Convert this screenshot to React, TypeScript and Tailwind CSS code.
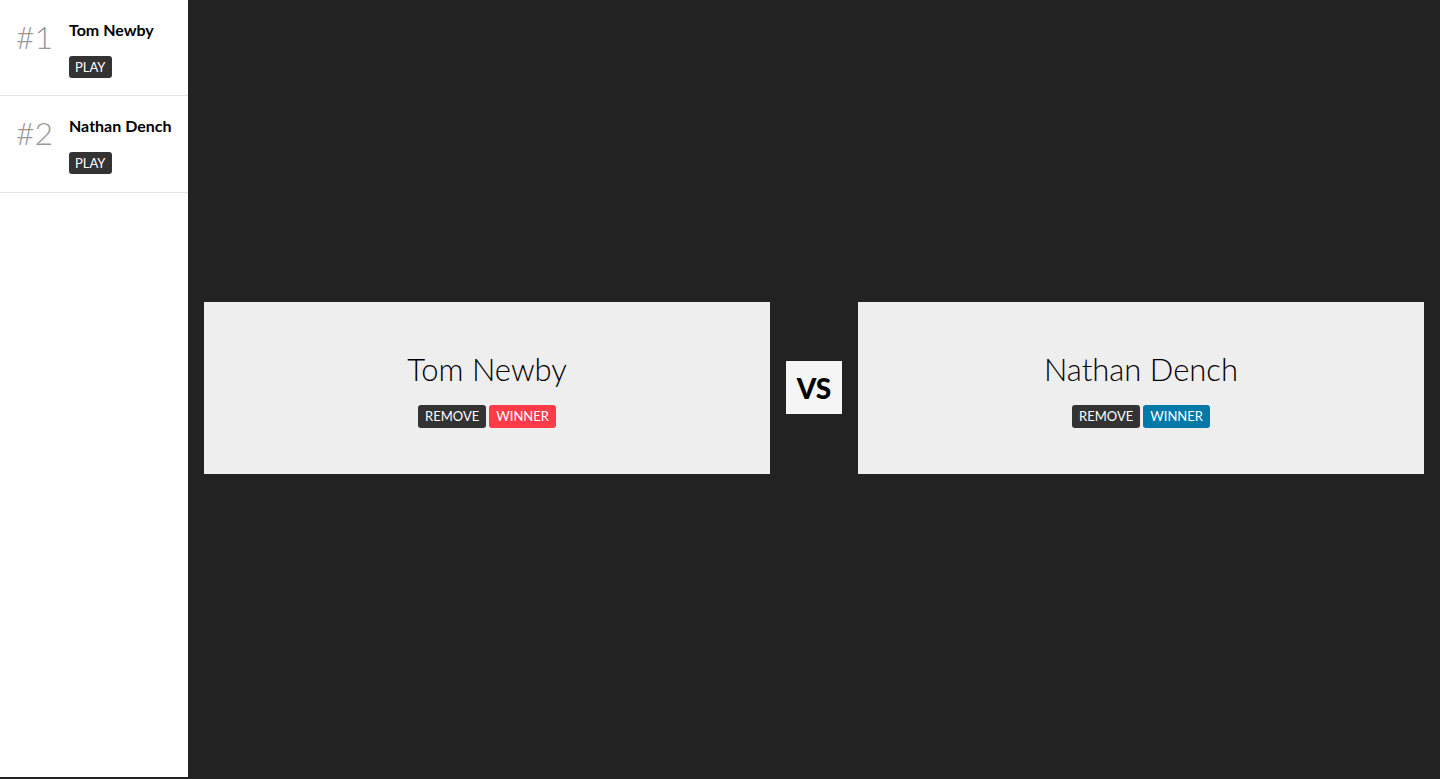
import React from "react";

const players = [
  { rank: 1, name: "Tom Newby", h: "h-[96px]" },
  { rank: 2, name: "Nathan Dench", h: "h-[97px]" },
];

function Btn({ children, className }: { children: React.ReactNode; className: string }) {
  return (
    <span className={`inline-block rounded-[3px] px-[7px] text-[13px] leading-[23px] text-white ${className}`}>
      {children}
    </span>
  );
}

function Card({ name, winnerClass }: { name: string; winnerClass: string }) {
  return (
    <div className="flex-1 bg-[#eeeeee] flex flex-col items-center pt-[47px] pb-[46px]">
      <div className="text-[31px] leading-[40px] font-light text-black">{name}</div>
      <div className="flex gap-[3px] mt-[16px]">
        <Btn className="bg-[#333333]">REMOVE</Btn>
        <Btn className={winnerClass}>WINNER</Btn>
      </div>
    </div>
  );
}

export default function App() {
  return (
    <div
      className="flex h-[779px] w-[1440px] overflow-hidden bg-[#222222]"
      style={{ fontFamily: "Lato, 'Open Sans', sans-serif" }}
    >
      <aside className="w-[188px] h-[777px] bg-white shrink-0">
        {players.map((p) => (
          <div key={p.rank} className={`flex border-b border-[#e3e3e3] px-4 pt-[18px] ${p.h}`}>
            <div className="w-[53px] text-[32px] leading-[38px] font-light text-[#999999]">#{p.rank}</div>
            <div className="flex flex-col">
              <div className="text-[16px] leading-[24px] font-bold text-black">{p.name}</div>
              <div className="mt-[12px]">
                <span className="inline-block rounded-[3px] bg-[#333333] px-[6px] text-[13px] leading-[22px] text-white">
                  PLAY
                </span>
              </div>
            </div>
          </div>
        ))}
      </aside>
      <main className="flex-1 flex items-center gap-4 px-4 pb-[4px]">
        <Card name="Tom Newby" winnerClass="bg-[#ff3b47]" />
        <div className="w-14 h-[53px] bg-[#f5f5f5] flex items-center justify-center text-[28px] font-black text-black">
          VS
        </div>
        <Card name="Nathan Dench" winnerClass="bg-[#0079a8]" />
      </main>
    </div>
  );
}
